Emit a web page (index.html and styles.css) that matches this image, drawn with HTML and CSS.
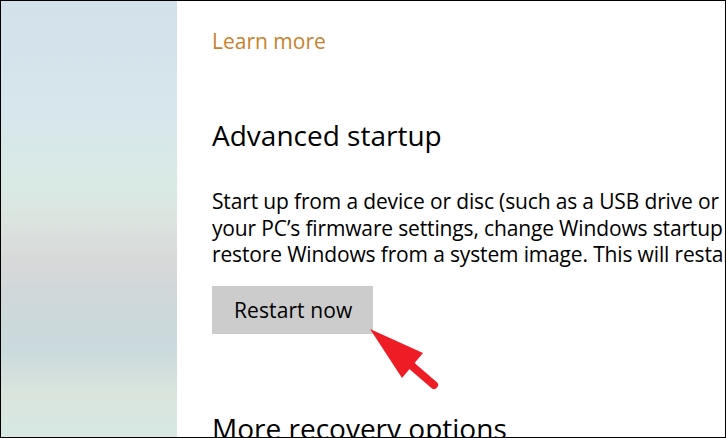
FILE: index.html
```html
<!DOCTYPE html>
<html lang="en">
<head>
<meta charset="utf-8">
<title>Recovery</title>
<link rel="stylesheet" href="styles.css">
</head>
<body>
<div class="frame">
  <aside class="sidebar"></aside>
  <main class="content">
    <a class="link" href="#">Learn more</a>
    <h2 class="heading">Advanced startup</h2>
    <p class="desc">
      <span class="line">Start up from a device or disc (such as a USB drive or DVD), change</span>
      <span class="line">your PC’s firmware settings, change Windows startup settings, or</span>
      <span class="line">restore Windows from a system image. This will restart your PC.</span>
    </p>
    <button class="btn" type="button">Restart now</button>
    <h2 class="heading heading-more">More recovery options</h2>
  </main>
  <svg class="arrow" width="80" height="70" viewBox="365 324 80 70" aria-hidden="true">
    <polygon points="370,329 423,353 402,378" fill="#ee1c25"/>
    <line x1="405" y1="360" x2="434" y2="385" stroke="#ee1c25" stroke-width="8" stroke-linecap="round"/>
  </svg>
</div>
</body>
</html>
```
FILE: styles.css
```css
html, body {
  margin: 0;
  padding: 0;
  background: #fff;
}
.frame {
  position: relative;
  width: 726px;
  height: 438px;
  box-sizing: border-box;
  border: 1px solid #000;
  display: flex;
  overflow: hidden;
  font-family: "Open Sans", "Noto Sans", sans-serif;
  color: #000;
}
.sidebar {
  flex: 0 0 176px;
  background: linear-gradient(180deg,
    #d3e1ea 0%,
    #d6e6ec 25%,
    #d9eae5 42%,
    #dbe4df 50%,
    #d7d8d9 60%,
    #ccd8da 72%,
    #cbdadd 80%,
    #d9e4dc 90%,
    #d7e8e3 100%);
}
.content {
  flex: 1;
  min-width: 0;
  padding: 27px 0 0 35px;
  overflow: hidden;
}
.link {
  display: block;
  font-size: 21px;
  line-height: 26px;
  color: #c9822c;
  text-decoration: none;
}
.heading {
  margin: 63px 0 0;
  font-size: 28px;
  line-height: 36px;
  font-weight: 400;
  white-space: nowrap;
}
.desc {
  margin: 35px 0 0;
  font-size: 21px;
  line-height: 26.5px;
  letter-spacing: -0.15px;
}
.line {
  display: block;
  white-space: nowrap;
}
.btn {
  display: block;
  margin-top: 18px;
  height: 48px;
  padding: 0 21px 0 22px;
  border: 0;
  background: #cccccc;
  font-family: inherit;
  font-size: 21px;
  letter-spacing: 0.1px;
  color: #000;
}
.heading-more {
  margin-top: 76px;
}
.arrow {
  position: absolute;
  left: 364px;
  top: 323px;
}
```
